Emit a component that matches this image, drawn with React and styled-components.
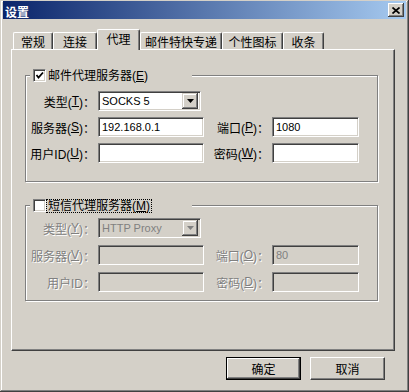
import styled, { createGlobalStyle } from "styled-components";

const GlobalStyle = createGlobalStyle`
  body {
    margin: 0;
    font-family: "Liberation Sans", "Noto Sans CJK SC", sans-serif;
    font-size: 12px;
    color: #000;
  }
`;

const tabs = [
  { label: "常规", w: 40 },
  { label: "连接", w: 44 },
  { label: "代理", w: 43, active: true },
  { label: "邮件特快专递", w: 82 },
  { label: "个性图标", w: 61 },
  { label: "收条", w: 41 },
];

const ArrowIcon = ({ color = "#000" }) => (
  <svg width="7" height="4" viewBox="0 0 7 4">
    <polygon points="0,0 7,0 3.5,4" fill={color} />
  </svg>
);

const CheckIcon = () => (
  <svg width="9" height="9" viewBox="0 0 9 9">
    <polyline points="1.5,4 3.5,6.5 8,1.5" fill="none" stroke="#000" strokeWidth="1.8" />
  </svg>
);

const Mn = ({ children }) => <u>{children}</u>;

const App = () => {
  return (
    <>
      <GlobalStyle />
      <Window>
        <TitleBar>
          <Title>设置</Title>
          <CloseButton>
            <svg width="8" height="7" viewBox="0 0 8 7">
              <path d="M0.5 0.5 L7.5 6.5 M7.5 0.5 L0.5 6.5" stroke="#000" strokeWidth="1.7" />
            </svg>
          </CloseButton>
        </TitleBar>
        <Body>
          <TabRow>
            {tabs.map((t) => (
              <Tab key={t.label} $w={t.w} $active={t.active}>
                {t.label}
              </Tab>
            ))}
          </TabRow>
          <Panel>
            <Group $h={107} $pt={15} $gap={6}>
              <Legend>
                <CheckBox>
                  <CheckIcon />
                </CheckBox>
                <LegendText>
                  邮件代理服务器(<Mn>E</Mn>)
                </LegendText>
              </Legend>
              <Label>
                类型(<Mn>T</Mn>)：
              </Label>
              <Select>
                <SelectValue>SOCKS 5</SelectValue>
                <DropButton>
                  <ArrowIcon />
                </DropButton>
              </Select>
              <Spacer />
              <Label>
                服务器(<Mn>S</Mn>)：
              </Label>
              <Input>192.168.0.1</Input>
              <Label>
                端口(<Mn>P</Mn>)：
              </Label>
              <Input>1080</Input>
              <Label>
                用户ID(<Mn>U</Mn>)：
              </Label>
              <Input />
              <Label>
                密码(<Mn>W</Mn>)：
              </Label>
              <Input />
            </Group>

            <Group $h={96} $pt={12} $gap={7} $mt={23}>
              <Legend>
                <CheckBox />
                <LegendText $focus>
                  短信代理服务器(<Mn>M</Mn>)
                </LegendText>
              </Legend>
              <Label $disabled>
                类型(<Mn>Y</Mn>)：
              </Label>
              <Select $disabled>
                <SelectValue $disabled>HTTP Proxy</SelectValue>
                <DropButton>
                  <ArrowIcon color="#808080" />
                </DropButton>
              </Select>
              <Spacer />
              <Label $disabled>
                服务器(<Mn>V</Mn>)：
              </Label>
              <Input $disabled />
              <Label $disabled>
                端口(<Mn>O</Mn>)：
              </Label>
              <Input $disabled>80</Input>
              <Label $disabled>用户ID：</Label>
              <Input $disabled />
              <Label $disabled>
                密码(<Mn>D</Mn>)：
              </Label>
              <Input $disabled />
            </Group>
          </Panel>
          <ButtonRow>
            <Button $default>确定</Button>
            <Button>取消</Button>
          </ButtonRow>
        </Body>
      </Window>
    </>
  );
};

const Window = styled.div`
  box-sizing: border-box;
  width: 409px;
  height: 392px;
  padding: 1px 3px 3px 3px;
  background: #d4d0c8;
  box-shadow: inset -1px -1px #404040, inset 1px 1px #d4d0c8,
    inset -2px -2px #808080, inset 2px 2px #fff;
`;

const TitleBar = styled.div`
  height: 18px;
  display: flex;
  align-items: center;
  justify-content: space-between;
  padding: 0 2px 0 2px;
  background: linear-gradient(to right, #0a246a, #a6caf0);
`;

const Title = styled.span`
  color: #fff;
  font-weight: bold;
  font-size: 12px;
  padding-top: 2px;
`;

const CloseButton = styled.div`
  box-sizing: border-box;
  width: 16px;
  height: 14px;
  display: flex;
  align-items: center;
  justify-content: center;
  background: #d4d0c8;
  box-shadow: inset -1px -1px #404040, inset 1px 1px #fff,
    inset -2px -2px #808080;
`;

const Body = styled.div`
  padding-left: 8px;
`;

const TabRow = styled.div`
  display: flex;
  align-items: flex-end;
  height: 20px;
  margin-top: 10px;
  padding-left: 2px;
`;

const Tab = styled.div`
  box-sizing: border-box;
  width: ${(p) => p.$w}px;
  height: ${(p) => (p.$active ? 21 : 17)}px;
  margin-bottom: ${(p) => (p.$active ? -1 : 0)}px;
  padding-bottom: ${(p) => (p.$active ? 3 : 0)}px;
  display: flex;
  align-items: center;
  justify-content: center;
  background: #d4d0c8;
  border-top: 1px solid #fff;
  border-left: 1px solid #fff;
  border-right: 1px solid #404040;
  border-radius: 2px 2px 0 0;
  box-shadow: inset -1px 0 #808080;
  position: relative;
  z-index: ${(p) => (p.$active ? 1 : 0)};
`;

const Panel = styled.div`
  box-sizing: border-box;
  width: 384px;
  height: 302px;
  padding: 25px 0 0 13px;
  border: 1px solid;
  border-color: #fff #404040 #404040 #fff;
  box-shadow: inset -1px -1px #808080;
`;

const Group = styled.div`
  box-sizing: border-box;
  position: relative;
  width: 353px;
  height: ${(p) => p.$h}px;
  margin-top: ${(p) => p.$mt || 0}px;
  padding: ${(p) => p.$pt}px 0 0 7px;
  border: 1px solid #808080;
  box-shadow: inset 1px 1px #fff, 1px 1px #fff;
  display: grid;
  grid-template-columns: 62px 106px 62px 87px;
  grid-auto-rows: 20px;
  column-gap: 3px;
  row-gap: ${(p) => p.$gap}px;
  align-content: start;
`;

const Legend = styled.div`
  position: absolute;
  top: -7px;
  left: 4px;
  width: 162px;
  height: 13px;
  padding-left: 3px;
  box-sizing: border-box;
  display: flex;
  align-items: center;
  background: #d4d0c8;
`;

const CheckBox = styled.div`
  box-sizing: border-box;
  width: 13px;
  height: 13px;
  flex-shrink: 0;
  display: flex;
  align-items: center;
  justify-content: center;
  background: #fff;
  border: 1px solid;
  border-color: #808080 #fff #fff #808080;
  box-shadow: inset 1px 1px #404040, inset -1px -1px #d4d0c8;
`;

const LegendText = styled.span`
  margin-left: 1px;
  padding: 0 1px;
  line-height: 12px;
  outline: ${(p) => (p.$focus ? "1px dotted #000" : "none")};
  white-space: nowrap;
`;

const Label = styled.div`
  display: flex;
  align-items: center;
  justify-content: flex-end;
  white-space: nowrap;
  color: ${(p) => (p.$disabled ? "#808080" : "#000")};
  text-shadow: ${(p) => (p.$disabled ? "1px 1px 0 #fff" : "none")};
  u {
    text-underline-offset: 1px;
  }
`;

const Input = styled.div`
  box-sizing: border-box;
  height: 20px;
  padding-left: 3px;
  display: flex;
  align-items: center;
  font-family: "Liberation Sans", sans-serif;
  font-size: 11px;
  color: ${(p) => (p.$disabled ? "#808080" : "#000")};
  background: ${(p) => (p.$disabled ? "#d4d0c8" : "#fff")};
  border: 1px solid;
  border-color: #808080 #fff #fff #808080;
  box-shadow: inset 1px 1px #404040, inset -1px -1px #d4d0c8;
`;

const Select = styled(Input)`
  width: 103px;
  padding-right: 2px;
  justify-content: space-between;
`;

const SelectValue = styled.span`
  color: ${(p) => (p.$disabled ? "#808080" : "#000")};
`;

const DropButton = styled.div`
  box-sizing: border-box;
  width: 16px;
  height: 16px;
  display: flex;
  align-items: center;
  justify-content: center;
  background: #d4d0c8;
  box-shadow: inset -1px -1px #404040, inset 1px 1px #d4d0c8,
    inset -2px -2px #808080, inset 2px 2px #fff;
`;

const Spacer = styled.div`
  grid-column: span 2;
`;

const ButtonRow = styled.div`
  display: flex;
  justify-content: flex-end;
  gap: 9px;
  margin-top: 6px;
  padding-right: 21px;
`;

const Button = styled.div`
  box-sizing: border-box;
  width: 75px;
  height: 23px;
  display: flex;
  align-items: center;
  justify-content: center;
  background: #d4d0c8;
  border: 1px solid ${(p) => (p.$default ? "#000" : "transparent")};
  box-shadow: ${(p) =>
    p.$default
      ? "inset -1px -1px #404040, inset 1px 1px #fff, inset -2px -2px #808080"
      : "inset -1px -1px #808080, inset 1px 1px #d4d0c8"};
  ${(p) =>
    !p.$default &&
    `border-color: #fff #404040 #404040 #fff;`}
`;

export default App;
